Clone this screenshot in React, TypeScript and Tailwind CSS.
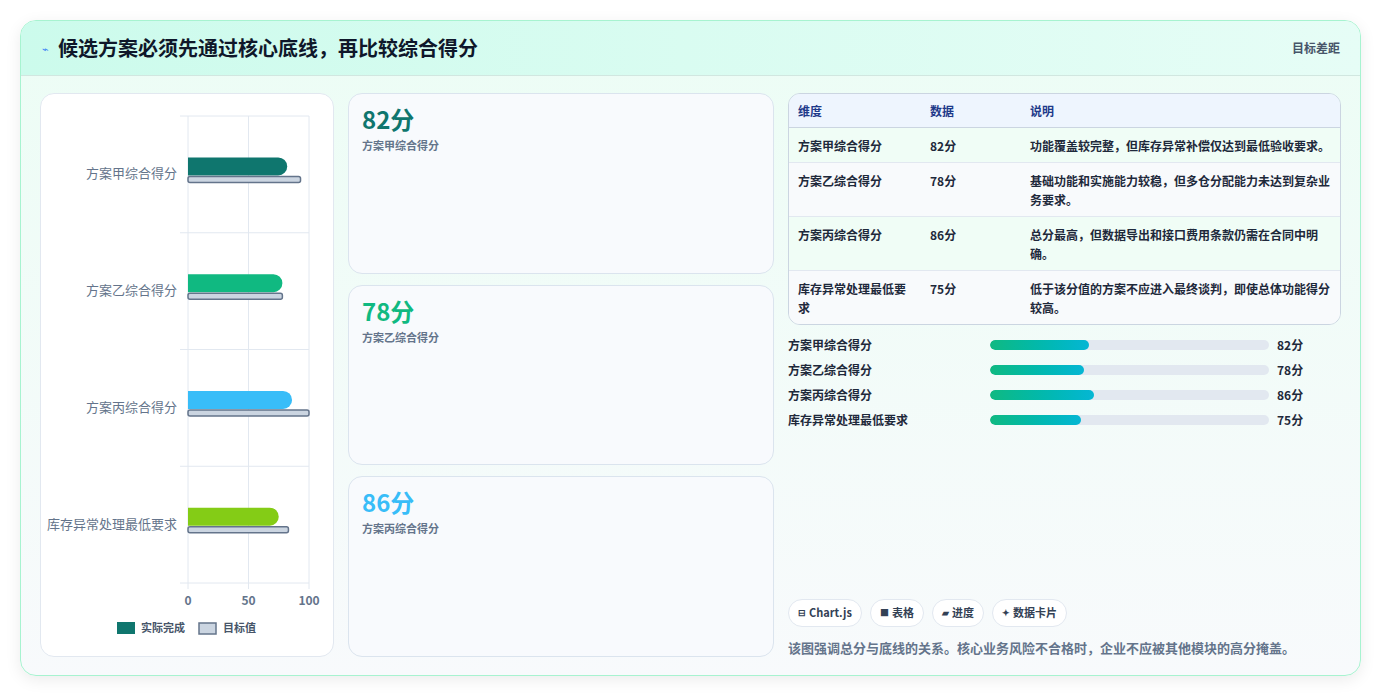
import React from "react";

const F = { fontFamily: '"Noto Sans CJK SC","Noto Sans",sans-serif' };

const cats = [
  { n: "方案甲综合得分", a: 82, t: 93, c: "#0f766e" },
  { n: "方案乙综合得分", a: 78, t: 78, c: "#10b981" },
  { n: "方案丙综合得分", a: 86, t: 100, c: "#38bdf8" },
  { n: "库存异常处理最低要求", a: 75, t: 83, c: "#84cc16" },
];

function Chart() {
  const x0 = 147, w = 121, y0 = 22, h = 467, band = h / 4;
  return (
    <svg width="294" height="563" className="block">
      {[0, 50, 100].map((v) => (
        <line key={v} x1={x0 + (v / 100) * w} x2={x0 + (v / 100) * w} y1={y0} y2={y0 + h + 6} stroke="#e2e8f0" />
      ))}
      {[0, 1, 2, 3, 4].map((i) => (
        <line key={i} x1={x0 - 8} x2={x0 + w} y1={y0 + i * band} y2={y0 + i * band} stroke="#e2e8f0" />
      ))}
      {cats.map((c, i) => {
        const cy = y0 + band * i + band / 2;
        return (
          <g key={i}>
            <text x={x0 - 11} y={cy + 4} textAnchor="end" fontSize="13" fill="#64748b" style={F}>{c.n}</text>
            <path d={`M${x0} ${cy - 17} H${x0 + (c.a / 100) * w - 9} a9 9 0 0 1 9 9 a9 9 0 0 1 -9 9 H${x0} Z`} fill={c.c} />
            <rect x={x0} y={cy + 2} width={(c.t / 100) * w} height={6} rx={2} fill="#cbd5e1" stroke="#64748b" strokeWidth="1.5" />
          </g>
        );
      })}
      {[0, 50, 100].map((v) => (
        <text key={v} x={x0 + (v / 100) * w} y={511} textAnchor="middle" fontSize="12" fontWeight="bold" fill="#64748b" style={F}>{v}</text>
      ))}
      <rect x={76} y={528} width={18} height={12} fill="#0f766e" />
      <text x={100} y={538} fontSize="11" fontWeight="600" fill="#475569" style={F}>实际完成</text>
      <rect x={158} y={529} width={17} height={11} fill="#cbd5e1" stroke="#64748b" strokeWidth="1.5" />
      <text x={182} y={538} fontSize="11" fontWeight="600" fill="#475569" style={F}>目标值</text>
    </svg>
  );
}

const rows = [
  ["方案甲综合得分", "82分", "功能覆盖较完整，但库存异常补偿仅达到最低验收要求。", "bg-[#f0fdf6]"],
  ["方案乙综合得分", "78分", "基础功能和实施能力较稳，但多仓分配能力未达到复杂业务要求。", "bg-[#f8fafc]"],
  ["方案丙综合得分", "86分", "总分最高，但数据导出和接口费用条款仍需在合同中明确。", "bg-[#f0fdf6]"],
  ["库存异常处理最低要求", "75分", "低于该分值的方案不应进入最终谈判，即使总体功能得分较高。", "bg-[#f8fafc]"],
];

export default function App() {
  return (
    <div className="w-[1381px] h-[697px] bg-white pt-[20px] px-[20px]" style={F}>
      <div className="w-[1341px] h-[656px] rounded-[16px] border border-[#a7f3d0] overflow-hidden flex flex-col bg-gradient-to-b from-[#ecfdf5] to-[#f8fafc] shadow-[0_4px_16px_rgba(0,0,0,0.08)]">
        <div className="h-[55px] shrink-0 flex items-center justify-between pl-[21px] pr-[20px] bg-gradient-to-r from-[#ccfbec] to-[#e6fdf6] border-b border-[#d1e7e0]">
          <div className="flex items-center gap-[9px]">
            <span className="text-[11px] text-[#3b82f6]">⌁</span>
            <span className="text-[20px] font-bold text-[#0f172a]">候选方案必须先通过核心底线，再比较综合得分</span>
          </div>
          <span className="text-[12px] font-semibold text-[#475569]">目标差距</span>
        </div>
        <div className="flex-1 flex gap-[14px] px-[19px] pt-[17px] pb-[18px]">
          <div className="w-[294px] h-[564px] rounded-[14px] border border-[#e2e8f0] bg-white overflow-hidden">
            <Chart />
          </div>
          <div className="w-[426px] flex flex-col gap-[11px]">
            {[
              ["82分", "方案甲综合得分", "text-[#0f766e]"],
              ["78分", "方案乙综合得分", "text-[#10b981]"],
              ["86分", "方案丙综合得分", "text-[#38bdf8]"],
            ].map(([v, l, c]) => (
              <div key={l} className="flex-1 rounded-[14px] border border-[#dbe4ee] bg-[#f8fafd] px-[13px] pt-[8px]">
                <div className={`text-[24px] font-bold leading-[34px] ${c}`}>{v}</div>
                <div className="text-[11px] font-semibold text-[#64748b] mt-[1px]">{l}</div>
              </div>
            ))}
          </div>
          <div className="flex-1 flex flex-col">
            <div className="rounded-[12px] border border-[#cbd5e1] overflow-hidden text-[12px] text-[#1e293b]">
              <div className="flex h-[34px] items-center bg-[#eef5fe] border-b border-[#cbd5e1] font-semibold text-[#1e3a8a]">
                <div className="w-[141px] pl-[9px]">维度</div>
                <div className="w-[100px]">数据</div>
                <div className="flex-1">说明</div>
              </div>
              {rows.map((r, i) => (
                <div key={i} className={`flex pt-[8px] pb-[7px] leading-[19px] min-h-[34px] ${r[3]} ${i < 3 ? "border-b border-[#e2e8f0]" : ""}`}>
                  <div className="w-[141px] pl-[9px] pr-[16px] font-semibold">{r[0]}</div>
                  <div className="w-[100px] font-semibold">{r[1]}</div>
                  <div className="flex-1 pr-[10px] font-semibold">{r[2]}</div>
                </div>
              ))}
            </div>
            <div className="mt-[10px] flex flex-col gap-[6px]">
              {cats.map((c) => (
                <div key={c.n} className="flex items-center h-[19px] text-[12px] font-semibold text-[#1e293b]">
                  <div className="w-[202px]">{c.n}</div>
                  <div className="w-[279px] h-[10px] rounded-full bg-[#e2e8f0] overflow-hidden">
                    <div className="h-full rounded-full bg-gradient-to-r from-[#10b981] to-[#06b6d4]" style={{ width: `${(c.a * 1.21 / 279) * 100}%` }} />
                  </div>
                  <div className="ml-[8px] font-bold">{c.a}分</div>
                </div>
              ))}
            </div>
            <div className="flex-1" />
            <div className="flex gap-[8px]">
              {[["⊟", "Chart.js"], ["■", "表格"], ["▰", "进度"], ["✦", "数据卡片"]].map(([i, t]) => (
                <div key={t} className="h-[28px] px-[9px] rounded-full border border-[#e2e8f0] bg-white flex items-center gap-[3px] text-[11px] font-semibold text-[#334155]">
                  <span className="text-[9px]">{i}</span>{t}
                </div>
              ))}
            </div>
            <div className="mt-[11px] text-[13px] font-semibold text-[#64748b]">该图强调总分与底线的关系。核心业务风险不合格时，企业不应被其他模块的高分掩盖。</div>
          </div>
        </div>
      </div>
    </div>
  );
}
